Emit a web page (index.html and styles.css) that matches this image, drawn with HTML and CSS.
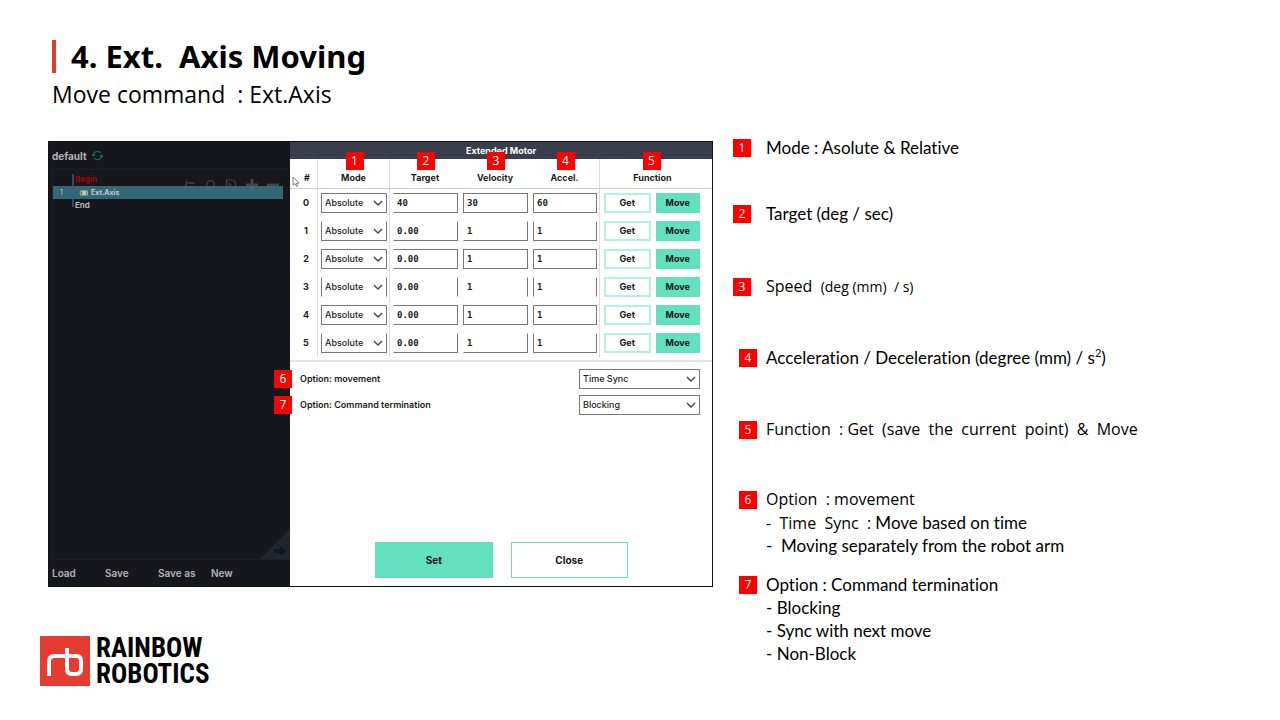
FILE: index.html
```html
<!DOCTYPE html>
<html lang="en">
<head>
<meta charset="utf-8">
<meta name="viewport" content="width=device-width, initial-scale=1">
<title>4. Ext. Axis Moving</title>
<link rel="stylesheet" href="styles.css">
</head>
<body>
<svg width="0" height="0" class="defs" aria-hidden="true">
  <symbol id="chevron" viewBox="0 0 10 6"><path d="M1 1l4 4 4-4" fill="none" stroke="currentColor" stroke-width="1.4"/></symbol>
</svg>
<div class="slide">
  <header class="head">
    <h1 class="title">4. Ext.&nbsp; Axis Moving</h1>
    <p class="subtitle">Move command&nbsp; : Ext.Axis</p>
  </header>

  <main class="main">
    <div class="left">
    <section class="window">
      <aside class="tree">
        <div class="tree-head">default
          <svg class="refresh" viewBox="0 0 12 12" aria-hidden="true"><path d="M1.5 6a4.5 4.5 0 0 1 8-2.8M10.500 6a4.500 4.500 0 0 1-8 2.800M0 4.500l1.500 2 2-1.500M12 7.500l-1.500-2-2 1.500" fill="none" stroke="#1f6f58" stroke-width="1.200"/></svg>
        </div>
        <div class="tree-body">
          <div class="tools">
            <svg viewBox="0 0 12 12" aria-hidden="true"><path d="M0 7l2 3 2-8M5 4h7M5 8h7" fill="none" stroke="currentColor" stroke-width="1.400"/></svg>
            <svg viewBox="0 0 12 12" aria-hidden="true"><path d="M4 8.500L1 11.500" stroke="currentColor" stroke-width="1.500"/><circle cx="6.500" cy="5.500" r="3.800" fill="none" stroke="currentColor" stroke-width="1.300"/></svg>
            <svg viewBox="0 0 12 12" aria-hidden="true"><path d="M1.500 1h6.500l2.500 2.500V11h-9zM3.500 4l2 1.500-2 1.500M6 8.500h3" fill="none" stroke="currentColor" stroke-width="1.200"/></svg>
            <svg viewBox="0 0 12 12" aria-hidden="true"><path d="M6 0v12M0 6h12" stroke="currentColor" stroke-width="2.800"/></svg>
            <svg viewBox="0 0 12 12" aria-hidden="true"><path d="M0 6h12" stroke="currentColor" stroke-width="2.800"/></svg>
          </div>
          <div class="program">
            <div class="step begin">Begin</div>
            <div class="step current"><span class="line-no">1</span><svg class="node" viewBox="0 0 10 8" aria-hidden="true"><path d="M3 1.500a2.600 2.600 0 0 0 0 5" fill="none" stroke="#a9b94a" stroke-width="1.200"/><rect x="3" y="1.500" width="4.500" height="5" fill="#b9c4c8"/><path d="M8.500 1.500v5" stroke="#a9b94a"/></svg>Ext.Axis</div>
            <div class="step end">End</div>
          </div>
          <svg class="corner" viewBox="0 0 30 30" aria-hidden="true"><path d="M30 0v30H0z" fill="#20252f"/><path d="M14 20h6v-3l7 5-7 5v-3h-6z" fill="#12151b"/></svg>
        </div>
        <nav class="files">
          <button type="button">Load</button><button type="button">Save</button><button type="button">Save as</button><button type="button">New</button>
        </nav>
      </aside>

      <form class="dialog">
        <h2 class="dialog-title">Extended Motor</h2>
        <svg class="pointer" viewBox="0 0 8 12" aria-hidden="true"><path d="M1 1v8l2-1.500 1.500 3 1.200-.6L4.400 7.200H7z" fill="#fff" stroke="#666" stroke-width=".8"/></svg>
        <table class="motors">
          <colgroup><col class="c-id"><col class="c-mode"><col class="c-num"><col class="c-num"><col class="c-num"><col></colgroup>
          <thead>
            <tr><th>#</th><th>Mode<span class="badge">1</span></th><th>Target<span class="badge">2</span></th><th>Velocity<span class="badge">3</span></th><th>Accel.<span class="badge">4</span></th><th><span class="anchor">Function<span class="badge">5</span></span></th></tr>
          </thead>
          <tbody>
            <tr>
              <td>0</td>
              <td><span class="select"><select aria-label="Mode 0"><option>Absolute</option><option>Relative</option></select><svg><use href="#chevron"/></svg></span></td>
              <td><input aria-label="Target 0" value="40"></td><td><input aria-label="Velocity 0" value="30"></td><td><input aria-label="Acceleration 0" value="60"></td>
              <td><div class="actions"><button type="button" class="btn">Get</button><button type="button" class="btn solid">Move</button></div></td>
            </tr>
            <tr class="open-top">
              <td>1</td>
              <td><span class="select"><select aria-label="Mode 1"><option>Absolute</option><option>Relative</option></select><svg><use href="#chevron"/></svg></span></td>
              <td><input aria-label="Target 1" value="0.00"></td><td><input aria-label="Velocity 1" value="1"></td><td><input aria-label="Acceleration 1" value="1"></td>
              <td><div class="actions"><button type="button" class="btn">Get</button><button type="button" class="btn solid">Move</button></div></td>
            </tr>
            <tr>
              <td>2</td>
              <td><span class="select"><select aria-label="Mode 2"><option>Absolute</option><option>Relative</option></select><svg><use href="#chevron"/></svg></span></td>
              <td><input aria-label="Target 2" value="0.00"></td><td><input aria-label="Velocity 2" value="1"></td><td><input aria-label="Acceleration 2" value="1"></td>
              <td><div class="actions"><button type="button" class="btn">Get</button><button type="button" class="btn solid">Move</button></div></td>
            </tr>
            <tr class="open-top open-bottom">
              <td>3</td>
              <td><span class="select"><select aria-label="Mode 3"><option>Absolute</option><option>Relative</option></select><svg><use href="#chevron"/></svg></span></td>
              <td><input aria-label="Target 3" value="0.00"></td><td><input aria-label="Velocity 3" value="1"></td><td><input aria-label="Acceleration 3" value="1"></td>
              <td><div class="actions"><button type="button" class="btn">Get</button><button type="button" class="btn solid">Move</button></div></td>
            </tr>
            <tr>
              <td>4</td>
              <td><span class="select"><select aria-label="Mode 4"><option>Absolute</option><option>Relative</option></select><svg><use href="#chevron"/></svg></span></td>
              <td><input aria-label="Target 4" value="0.00"></td><td><input aria-label="Velocity 4" value="1"></td><td><input aria-label="Acceleration 4" value="1"></td>
              <td><div class="actions"><button type="button" class="btn">Get</button><button type="button" class="btn solid">Move</button></div></td>
            </tr>
            <tr class="open-top">
              <td>5</td>
              <td><span class="select"><select aria-label="Mode 5"><option>Absolute</option><option>Relative</option></select><svg><use href="#chevron"/></svg></span></td>
              <td><input aria-label="Target 5" value="0.00"></td><td><input aria-label="Velocity 5" value="1"></td><td><input aria-label="Acceleration 5" value="1"></td>
              <td><div class="actions"><button type="button" class="btn">Get</button><button type="button" class="btn solid">Move</button></div></td>
            </tr>
          </tbody>
        </table>
        <div class="options">
          <div class="option"><span class="badge">6</span><label for="movement">Option: movement</label><span class="select"><select id="movement"><option>Time Sync</option></select><svg><use href="#chevron"/></svg></span></div>
          <div class="option"><span class="badge">7</span><label for="termination">Option: Command termination</label><span class="select"><select id="termination"><option>Blocking</option><option>Non-Block</option></select><svg><use href="#chevron"/></svg></span></div>
        </div>
        <div class="footer-actions"><button type="button" class="btn solid large">Set</button><button type="button" class="btn large">Close</button></div>
      </form>
    </section>

    <div class="brand">
      <svg class="mark" viewBox="0 0 50 50" aria-hidden="true"><rect width="50" height="50" fill="#e63c2f"/><path d="M9 40V25.500q0-5.500 5.500-5.500H36q5 0 5 5V33q0 5-5 5H32q-5 0-5-5V12" fill="none" stroke="#fff" stroke-width="4"/><path d="M31 18v4" stroke="#f3b0aa" stroke-width="1"/></svg>
      <div class="brand-name">RAINBOW<br>ROBOTICS</div>
    </div>
    </div>

    <ul class="notes">
      <li class="note"><span class="badge">1</span><p>Mode : Asolute &amp; Relative</p></li>
      <li class="note"><span class="badge">2</span><p>Target (deg / sec)</p></li>
      <li class="note"><span class="badge">3</span><p class="alt">Speed&nbsp; <small>(deg (mm)&nbsp; / s)</small></p></li>
      <li class="note inset"><span class="badge">4</span><p>Acceleration / Deceleration (degree (mm) / s<sup>2</sup>)</p></li>
      <li class="note inset"><span class="badge">5</span><p class="alt">Function&nbsp; : Get&nbsp; (save&nbsp; the&nbsp; current&nbsp; point)&nbsp; &amp;&nbsp; Move</p></li>
      <li class="note inset"><span class="badge">6</span><div><p class="alt">Option&nbsp; : movement</p><p><span class="alt">-&nbsp; Time&nbsp; Sync&nbsp; : </span>Move based on time</p><p>-&nbsp; Moving separately from the robot arm</p></div></li>
      <li class="note inset"><span class="badge">7</span><div><p>Option : Command termination</p><p>- Blocking</p><p>- Sync with next move</p><p>- Non-Block</p></div></li>
    </ul>
  </main>
</div>
</body>
</html>
```
FILE: styles.css
```css
* { box-sizing: border-box; }
body { margin: 0; background: #fff; color: #000; font-family: "Open Sans", "Noto Sans", sans-serif; }
h1, h2, p, ul { margin: 0; padding: 0; font-weight: normal; }
ul { list-style: none; }
button, input, select { font: inherit; color: inherit; margin: 0; border-radius: 0; }
.defs { position: absolute; }

.slide { padding: 36px 40px 24px; }
.head { padding-left: 12px; }
.title { font: bold 31px/40px "Noto Sans", sans-serif; display: flex; align-items: center; gap: 15px; }
.title::before { content: ""; width: 4px; height: 33px; background: #e63c2f; }
.subtitle { font-size: 23px; line-height: 36px; }

.main { display: grid; grid-template-columns: minmax(0, 673fr) minmax(0, 507fr); gap: 20px; padding-top: 29px; align-items: start; }

.badge { display: inline-flex; flex: none; align-items: center; justify-content: center; width: 18px; height: 18px; background: #f00; color: #fff; font: 12px/18px "Open Sans", sans-serif; }

.window { margin-left: 8px; display: grid; grid-template-columns: 241fr 422fr; min-height: 446px; border: 1px solid #111; font: bold 9px/12px Inter, sans-serif; }

.tree { background: #16171c; color: #b4b4b6; display: flex; flex-direction: column; }
.tree-head { height: 27px; padding-left: 3px; display: flex; align-items: center; gap: 5px; font-size: 10px; }
.refresh { width: 11px; height: 11px; }
.tree-body { flex: 1; margin-left: 3px; border: 1px solid #1d1f26; border-right: 0; position: relative; padding-top: 4px; }
.tools { position: absolute; top: 9px; right: 11px; display: flex; gap: 9px; color: #44464b; }
.tools svg { width: 12px; height: 12px; }
.program { font-size: 8px; margin-right: 7px; }
.step { height: 12px; padding-left: 22px; position: relative; }
.step.begin { color: #a80008; line-height: 11px; }
.step.current { height: 13px; padding-left: 0; display: flex; align-items: center; background: rgba(58, 121, 137, .82); color: #c3cdd0; font-size: 7px; }
.begin::before, .end::before { content: ""; position: absolute; left: 19px; top: 0; width: 2px; height: 12px; background: #42425a; }
.end::before { height: 8px; }
.line-no { width: 19px; padding-left: 7px; font-weight: normal; }
.node { width: 10px; height: 8px; margin: 0 2px 0 7px; }
.corner { position: absolute; right: 0; bottom: 0; width: 30px; height: 30px; }
.files { display: grid; grid-template-columns: repeat(4, 53px); height: 26px; padding-left: 3px; }
.files button { border: 0; padding: 0; background: none; text-align: left; font-size: 10px; font-weight: 600; }

.dialog { position: relative; display: flex; flex-direction: column; background: #fff; color: #1b1b1b; }
.dialog-title { height: 17px; background: #3a3e4c; color: #fff; font-size: 9px; line-height: 17px; font-weight: bold; text-align: center; }
.pointer { position: absolute; left: 2px; top: 34px; width: 8px; height: 12px; }
.motors { width: 100%; table-layout: fixed; border-collapse: separate; border-spacing: 0; border-bottom: 2px solid #e2e2e2; padding-bottom: 3px; }
.c-id { width: 28px; }
.c-mode { width: 72px; }
.c-num { width: 70px; }
.motors th { position: relative; height: 30px; padding: 8px 0 0; font-weight: bold; border-bottom: 1px solid #ccc; }
.motors th:first-child, .motors td:first-child { padding-left: 7px; text-align: center; }
.motors th .badge { position: absolute; top: -7px; left: calc(50% - 8px); }
.anchor { position: relative; }
.motors th .anchor .badge { top: -20px; left: calc(50% - 10px); }
.motors td { height: 28px; padding: 0 2px 0 3px; }
.motors th:nth-child(1), .motors td:nth-child(1), .motors th:nth-child(2), .motors td:nth-child(2), .motors th:nth-child(5), .motors td:nth-child(5) { border-right: 1px solid #ddd; }
.motors td:last-child { padding: 0 12px 0 4px; }
.motors th:last-child { padding-right: 7px; }

.select { position: relative; display: block; height: 20px; font-weight: 500; font-size: 9px; }
.select select { display: block; width: 100%; height: 100%; padding: 0 16px 0 3px; appearance: none; background: #fff; border: 1px solid #777; }
.select svg { position: absolute; right: 4px; top: 7px; width: 10px; height: 6px; color: #444; pointer-events: none; }
.motors input { display: block; width: 100%; height: 20px; padding: 0 3px; border: 1px solid #777; background: #fff; font: bold 9px/12px "DejaVu Sans Mono", monospace; }
.motors td:nth-child(3) input { border-left-color: transparent; }
.open-top select, .open-top input { border-top-color: transparent; }
.open-bottom select, .open-bottom input { border-bottom-color: transparent; }
.open-top td:nth-child(4) input { border-left-color: transparent; }

.actions { display: grid; grid-template-columns: 46fr 44fr; gap: 5px; }
.btn { height: 20px; padding: 0; border: 2px solid #b5f1e0; background: #fff; color: #151515; font: bold 9px/12px Inter, sans-serif; }
.btn.solid { background: #63e1bf; border-color: #63e1bf; }

.options { display: grid; gap: 6px; padding: 7px 12px 0 10px; }
.option { position: relative; display: grid; grid-template-columns: 1fr 121px; align-items: center; font-size: 9px; font-weight: 600; }
.option .badge { position: absolute; left: -26px; top: 1px; }
.footer-actions { margin-top: auto; padding: 0 84px 8px 85px; display: grid; grid-template-columns: 1fr 1fr; gap: 18px; }
.btn.large { height: 36px; border-width: 1px; border-color: #63e1bf; font-size: 10px; }

.notes { display: grid; grid-template-rows: 66px 73px 71px 72px 70px 85px auto; font: 17px/23px Lato, sans-serif; font-variant-ligatures: none; }
.note { display: flex; align-items: flex-start; gap: 15px; }
.note .badge { margin-top: -2px; }
.note p { margin-top: -5px; }
.note p + p { margin-top: 0; }
.note.inset { padding-left: 6px; gap: 9px; }
.alt { font-family: "Open Sans", sans-serif; font-size: 16px; }
span.alt { line-height: 16px; }
.alt small { font-size: 14px; }
.note sup { font-size: 11px; line-height: 0; }

.brand { margin-top: 48px; display: flex; align-items: center; gap: 6px; }
.mark { width: 50px; height: 50px; }
.brand-name { font: bold 27px/26px "Roboto Condensed", "Liberation Sans Narrow", "DejaVu Sans Condensed", sans-serif; }
```
